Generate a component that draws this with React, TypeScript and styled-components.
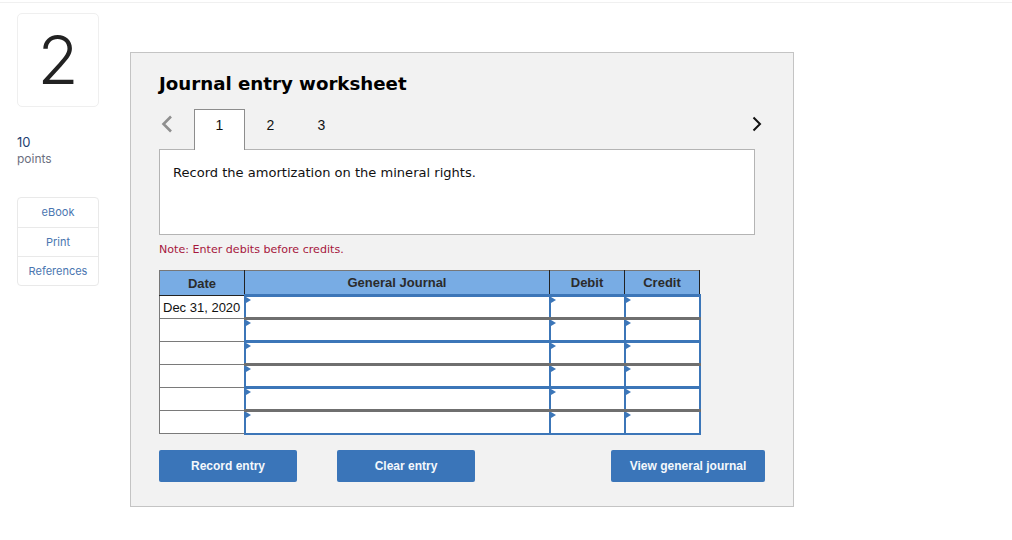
import { createGlobalStyle, styled } from "styled-components";

const GlobalStyle = createGlobalStyle`
  html, body {
    margin: 0;
    padding: 0;
    background: #fff;
  }
`;

const Page = styled.div`
  width: 1012px;
  height: 538px;
  box-sizing: border-box;
  border-top: 1px solid #f0f0f0;
  margin-top: 2px;
  display: flex;
  align-items: flex-start;
  padding-left: 17px;
  overflow: hidden;
`;

const Sidebar = styled.aside`
  width: 82px;
  margin-top: 10px;
  font-family: Inter, "Open Sans", sans-serif;
`;

const NumberBox = styled.div`
  height: 94px;
  box-sizing: border-box;
  border: 1px solid #efefef;
  border-radius: 5px;
  display: flex;
  align-items: center;
  justify-content: center;
  padding-bottom: 2px;
  font-size: 67px;
  font-weight: 300;
  color: #222;
`;

const Points = styled.div`
  margin-top: 27px;
  font-size: 12px;
  line-height: 17px;
  height: 33px;
  color: #6b6f80;

  strong {
    display: block;
    height: 16px;
    line-height: 16px;
    font-weight: 400;
    color: #1d3f72;
    font-size: 13px;
  }
`;

const LinkList = styled.div`
  margin-top: 30px;
  border: 1px solid #e9e9e9;
  border-radius: 4px;
`;

const SideLink = styled.div`
  height: 29px;
  box-sizing: border-box;
  display: flex;
  align-items: center;
  justify-content: center;
  font-size: 11px;
  color: #4a76b0;
  border-top: 1px solid #e9e9e9;

  &:first-child {
    border-top: 0;
    padding-bottom: 1px;
  }
`;

const Panel = styled.main`
  width: 664px;
  height: 455px;
  box-sizing: border-box;
  margin: 49px 0 0 31px;
  background: #f2f2f2;
  border: 1px solid #c4c4c4;
  padding: 0 28px;
`;

const Title = styled.h2`
  margin: 20px 0 0;
  height: 22px;
  line-height: 22px;
  font-family: "DejaVu Sans", Verdana, sans-serif;
  font-size: 18.2px;
  font-weight: 700;
  color: #000;
`;

const TabRow = styled.div`
  margin-top: 14px;
  width: 605px;
  height: 40px;
  display: flex;
  align-items: flex-start;
  position: relative;
  z-index: 1;
`;

const Chevron = styled.svg`
  display: block;
  flex: none;
  width: 14px;
  height: 18px;
  margin-top: 6px;
`;

const Tabs = styled.div`
  display: flex;
  margin-left: 21px;
  flex: 1;
`;

const Tab = styled.div<{ $active?: boolean }>`
  width: 51px;
  height: 41px;
  box-sizing: border-box;
  display: flex;
  align-items: center;
  justify-content: center;
  padding-bottom: 10px;
  font-family: "Liberation Sans", Arial, sans-serif;
  font-size: 14px;
  color: #111;
  background: ${({ $active }) => ($active ? "#fff" : "transparent")};
  border: ${({ $active }) => ($active ? "1px solid #8d8d8d" : "1px solid transparent")};
  border-bottom: 0;
`;

const QuestionBox = styled.div`
  width: 596px;
  height: 86px;
  box-sizing: border-box;
  background: #fff;
  border: 1px solid #b4b4b4;
  padding: 15px 13px;
  font-family: "DejaVu Sans", Verdana, sans-serif;
  font-size: 13.06px;
  line-height: 16px;
  color: #111;
`;

const Note = styled.div`
  margin-top: 8px;
  height: 14px;
  line-height: 14px;
  font-family: "DejaVu Sans", Verdana, sans-serif;
  font-size: 11.1px;
  color: #a6173d;
`;

const Journal = styled.table`
  margin-top: 13px;
  width: 540px;
  border-collapse: collapse;
  table-layout: fixed;
  font-family: "Liberation Sans", Arial, sans-serif;
  font-size: 13px;
`;

const HeadCell = styled.th<{ $width: number }>`
  box-sizing: border-box;
  width: ${({ $width }) => $width}px;
  height: 25px;
  padding: 0;
  background: #78ace4;
  border: 1px solid #222;
  border-top-color: #777;
  font-weight: 700;
  color: #2b2b2b;
  text-align: center;

  &:first-child {
    border-left-color: #777;
  }
`;

const DateCell = styled.td`
  height: 22px;
  padding: 0 3px;
  background: #fff;
  border: 1px solid #7a7a7a;
  font-size: 13px;
  color: #111;
  white-space: nowrap;
  overflow: hidden;
`;

const EntryCell = styled.td<{ $tone: "blue" | "grey" }>`
  position: relative;
  padding: 0;
  background: #fff;
  border-style: solid;
  border-width: 3px 2px;
  border-color: #3c76b8;
  border-bottom-color: ${({ $tone }) => ($tone === "blue" ? "#6f6f6f" : "#3c76b8")};
  border-top-color: ${({ $tone }) => ($tone === "blue" ? "#3c76b8" : "#6f6f6f")};

  tr:last-child > & {
    border-bottom-width: 2px;
  }

  &::before {
    content: "";
    position: absolute;
    left: 0;
    top: 0;
    border-style: solid;
    border-width: 3px 0 3px 5px;
    border-color: transparent transparent transparent #3c76b8;
  }
`;

const ButtonRow = styled.div`
  margin-top: 15px;
  width: 606px;
  display: flex;
`;

const ActionButton = styled.button<{ $wide?: boolean; $push?: boolean }>`
  width: ${({ $wide }) => ($wide ? 154 : 138)}px;
  height: 32px;
  margin-left: ${({ $push }) => ($push ? "auto" : "0")};
  margin-right: ${({ $wide, $push }) => ($wide || $push ? "0" : "40px")};
  background: #3a75b9;
  border: 0;
  border-radius: 2px;
  padding: 0;
  font-family: "Liberation Sans", Arial, sans-serif;
  font-size: 12px;
  font-weight: 700;
  color: #f4f8fc;
`;

const dates = ["Dec 31, 2020", "", "", "", "", ""];

export default function App() {
  return (
    <>
      <GlobalStyle />
      <Page>
        <Sidebar>
          <NumberBox>2</NumberBox>
          <Points>
            <strong>10</strong>
            points
          </Points>
          <LinkList>
            <SideLink>eBook</SideLink>
            <SideLink>Print</SideLink>
            <SideLink>References</SideLink>
          </LinkList>
        </Sidebar>
        <Panel>
          <Title>Journal entry worksheet</Title>
          <TabRow>
            <Chevron viewBox="0 0 14 18" aria-hidden="true">
              <path d="M12 1.5 4.5 9l7.5 7.5" fill="none" stroke="#8f8f8f" strokeWidth="2.6" />
            </Chevron>
            <Tabs>
              <Tab $active>1</Tab>
              <Tab>2</Tab>
              <Tab>3</Tab>
            </Tabs>
            <Chevron viewBox="0 0 14 18" aria-hidden="true">
              <path d="M3.5 2.5 10 9l-6.5 6.5" fill="none" stroke="#111" strokeWidth="2" />
            </Chevron>
          </TabRow>
          <QuestionBox>Record the amortization on the mineral rights.</QuestionBox>
          <Note>Note: Enter debits before credits.</Note>
          <Journal>
            <thead>
              <tr>
                <HeadCell $width={85}>Date</HeadCell>
                <HeadCell $width={305}>General Journal</HeadCell>
                <HeadCell $width={75}>Debit</HeadCell>
                <HeadCell $width={75}>Credit</HeadCell>
              </tr>
            </thead>
            <tbody>
              {dates.map((date, i) => {
                const tone = i % 2 === 0 ? "blue" : "grey";
                return (
                  <tr key={i}>
                    <DateCell>{date}</DateCell>
                    <EntryCell $tone={tone} />
                    <EntryCell $tone={tone} />
                    <EntryCell $tone={tone} />
                  </tr>
                );
              })}
            </tbody>
          </Journal>
          <ButtonRow>
            <ActionButton>Record entry</ActionButton>
            <ActionButton>Clear entry</ActionButton>
            <ActionButton $wide $push>View general journal</ActionButton>
          </ButtonRow>
        </Panel>
      </Page>
    </>
  );
}
